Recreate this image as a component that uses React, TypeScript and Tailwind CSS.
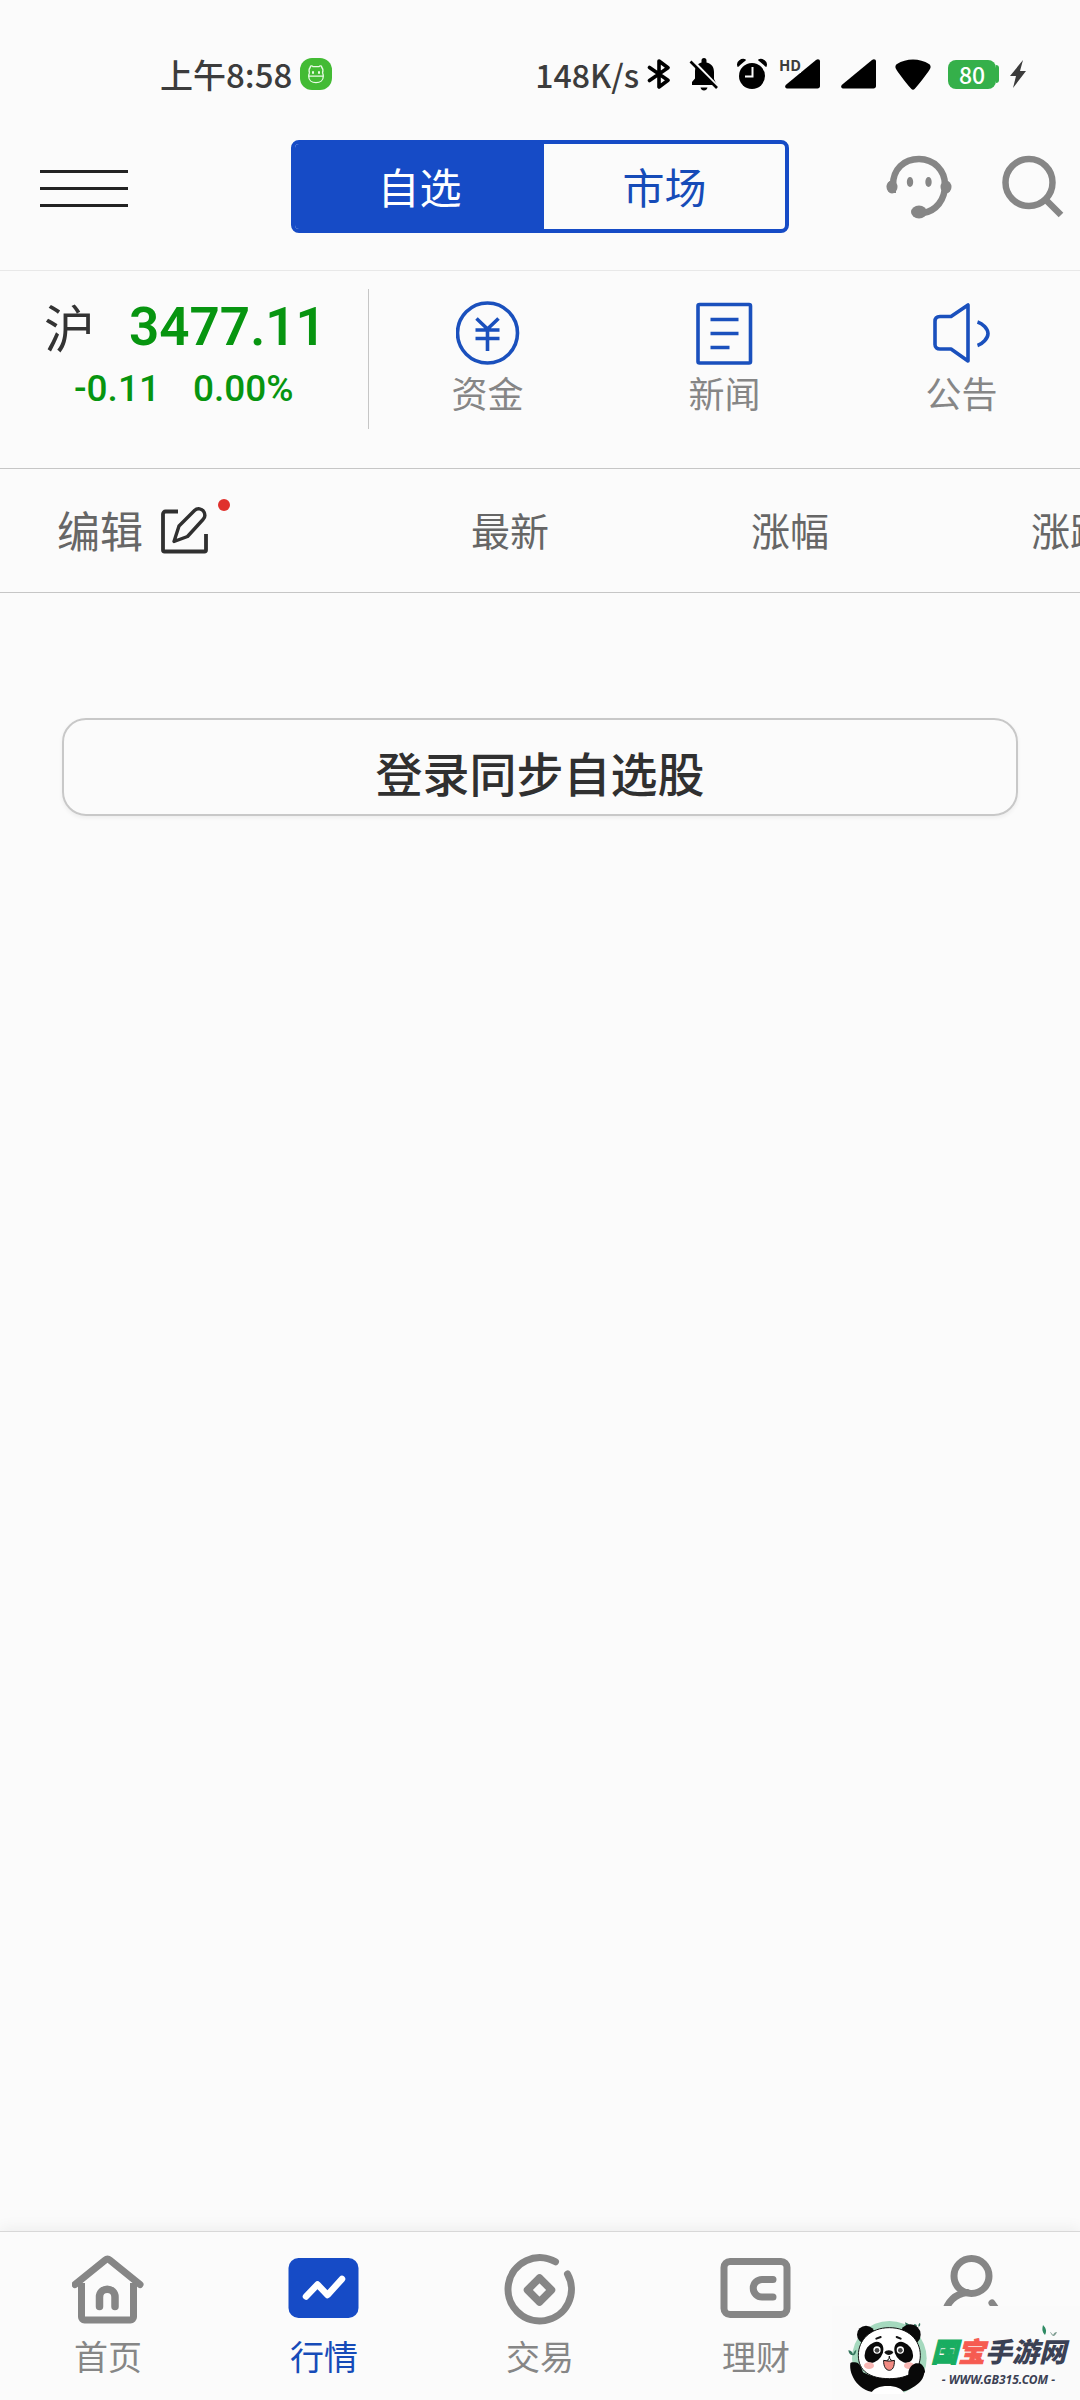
import type { ReactNode } from 'react';

function StatusBar() {
  return (
    <div className="flex h-[98px] items-center justify-between pt-[50px] pr-[53px] pl-[160px] text-[32px] leading-[46px] font-medium text-[#3c3c3c]">
      <div className="flex items-center gap-2">
        <span className="text-[33px]">上午8:58</span>
        <svg width="32" height="32" viewBox="0 0 32 32" fill="none" stroke="#e9fbe6" strokeWidth="1.3">
          <rect width="32" height="32" rx="12" fill="#43bb34" stroke="none" />
          <path d="M9.500 15c-.8-2.500-.5-4.500.8-5.800-.3-1.500 1.700-1.900 2.700-.5h6c1-1.400 3-1 2.700.5 1.300 1.300 1.600 3.300.8 5.800" />
          <path d="M8.700 18.200h14.600c0 4.300-3.300 6.500-7.300 6.500s-7.300-2.200-7.300-6.500Zm0 0c0-1.400.3-2.400.8-3.200M23.300 18.200c0-1.400-.3-2.400-.8-3.200" />
          <path d="M13 13.300v2.400M19 13.300v2.400" strokeWidth="2" />
        </svg>
      </div>
      <div className="flex items-center">
        <span>148K/s</span>
        <svg className="ml-2" width="24" height="32" viewBox="0 0 24 32" fill="none" stroke="#000" strokeWidth="3.600" strokeLinejoin="round" strokeLinecap="round">
          <path d="M2.500 9.500 21 22.300 12 29V3l9 6.700L2.500 22.500" />
        </svg>
        <svg className="ml-[18px]" width="30" height="34" viewBox="0 0 30 34">
          <path d="M3 28v-3l3-3.500V15C6 9.500 8.500 6.500 12.500 5.500V3.500a2.500 2.500 0 0 1 5 0v2C22.500 6.500 25 10 25 15v7l3 6ZM11.500 30.500h7c-.5 2-1.700 3-3.500 3s-3-1-3.500-3Z" fill="#000" />
          <path d="M1 1 32 33" stroke="#fbfbfb" strokeWidth="3" />
          <path d="M1.500 4.500 28 31" stroke="#000" strokeWidth="2.600" />
        </svg>
        <svg className="ml-[18px]" width="30" height="32" viewBox="0 0 30 32">
          <path d="M1.500 8.500C-.5 4 5 .5 8.500 2.500M28.500 8.500C30.500 4 25 .5 21.500 2.500" fill="#000" stroke="#000" strokeWidth="2" />
          <circle cx="15" cy="18" r="13" fill="#000" />
          <path d="M15.500 9v9.500H8" fill="none" stroke="#fbfbfb" strokeWidth="2" />
        </svg>
        <div className="relative ml-[18px] h-[30px] w-[36px]">
          <svg width="36" height="30" viewBox="0 0 36 30">
            <path d="M2 29.500c-2 0-2.500-2.500-1-3.800L31 1c2-1.500 4-.5 4 1.500V27c0 1.500-1 2.500-2.500 2.500Z" fill="#000" />
          </svg>
          <span className="absolute -top-[2px] -left-[6px] bg-[#fbfbfb] text-[15px] leading-[16px] font-bold">HD</span>
        </div>
        <svg className="ml-5" width="36" height="30" viewBox="0 0 36 30">
          <path d="M2 29.500c-2 0-2.500-2.500-1-3.800L31 1c2-1.500 4-.5 4 1.500V27c0 1.500-1 2.500-2.500 2.500Z" fill="#000" />
        </svg>
        <svg className="ml-[18px]" width="36" height="31" viewBox="0 0 36 31">
          <path d="M.8 9.500C0 8 .5 6 2 5 11-1 25-1 34 5c1.500 1 2 3 1.200 4.500-1.500 3-9 13-15.400 20.300-1 1.200-2.600 1.200-3.600 0C9.800 22.500 2.300 12.500.8 9.500Z" fill="#000" />
        </svg>
        <div className="ml-[17px] flex items-center">
          <span className="flex h-[29px] w-[48px] items-center justify-center rounded-lg bg-[#35b04a] text-[23px] leading-none font-medium text-white">80</span>
          <span className="h-[18px] w-[3px] rounded-r-sm bg-[#35b04a]" />
        </div>
        <svg className="ml-[10px]" width="18" height="30" viewBox="0 0 18 30">
          <path d="M14 1 1 17h6L4 29 17 12h-6Z" fill="#3c3c3c" />
        </svg>
      </div>
    </div>
  );
}

function Header() {
  return (
    <header className="grid grid-cols-[1fr_498px_1fr] items-center border-b border-[#e8e8e8] pt-[42px] pb-[37px]">
      <div className="pt-[3px] pl-10">
        <button aria-label="菜单" className="flex w-[88px] flex-col gap-[14px] py-4">
          <span className="h-[3px] w-full bg-[#222]" />
          <span className="h-[3px] w-full bg-[#222]" />
          <span className="h-[3px] w-full bg-[#222]" />
        </button>
      </div>
      <div className="flex h-[93px] overflow-hidden rounded-lg border-4 border-[#164bc6] text-[42px]">
        <button className="w-[249px] bg-[#164bc6] pb-[3px] text-white">自选</button>
        <button className="flex-1 pb-[3px] text-[#164bb8]">市场</button>
      </div>
      <div className="flex items-center justify-end gap-[50px] pr-4">
        <button aria-label="客服">
          <svg width="66" height="64" viewBox="0 0 66 64" fill="none" stroke="#868686" strokeWidth="6.500">
            <path d="M7 30C7 14 18 4 33 4s26 11.500 26 26c0 15-9 26-22 28" />
            <path d="M10 26v12H7a6.500 6.500 0 0 1-3-12ZM57 25.500v13a6.500 6.500 0 0 0 4-12Z" fill="#868686" stroke="none" />
            <ellipse cx="6" cy="32" rx="5.500" ry="6.500" fill="#868686" stroke="none" />
            <ellipse cx="60" cy="32" rx="5.500" ry="6.500" fill="#868686" stroke="none" />
            <ellipse cx="33" cy="57" rx="8" ry="6.500" fill="#868686" stroke="none" />
            <ellipse cx="24" cy="27" rx="3.200" ry="5" fill="#868686" stroke="none" />
            <ellipse cx="42.500" cy="27" rx="3.200" ry="5" fill="#868686" stroke="none" />
          </svg>
        </button>
        <button aria-label="搜索">
          <svg width="62" height="64" viewBox="0 0 62 64" fill="none" stroke="#868686" strokeWidth="6.500">
            <circle cx="27" cy="27.500" r="23.500" />
            <path d="M43.500 44.500 59 60" />
          </svg>
        </button>
      </div>
    </header>
  );
}

const shortcuts: { label: string; icon: ReactNode }[] = [
  {
    label: '资金',
    icon: (
      <>
        <circle cx="31.500" cy="32" r="30" />
        <path d="M20.500 17.500 31.500 28l11-10.500M19.500 29h24M19.500 37.500h24M31.500 28v22" />
      </>
    ),
  },
  {
    label: '新闻',
    icon: (
      <>
        <rect x="5" y="3.500" width="52.500" height="58.500" rx="1.500" />
        <path d="M17.500 18.500h28M17.500 32.500h28M17.500 46.500h19" />
      </>
    ),
  },
  {
    label: '公告',
    icon: (
      <>
        <path d="M38 4v56L21 48H10c-3 0-5-1.500-5-4.500v-23c0-3.500 2-5 5-5h11Z" />
        <path d="M47.500 21c5 1.500 10.500 6.500 10.500 11.500s-5.500 10.500-10.500 12" />
      </>
    ),
  },
];

function IndexPanel() {
  return (
    <section className="flex h-[198px] border-b border-[#c6c6c6]">
      <div className="mt-[18px] h-[140px] w-[369px] shrink-0 border-r border-[#c6c6c6] pt-[7px] text-[#079510]">
        <div className="flex h-16 items-center pl-11">
          <span className="pb-1 text-[51px] text-[#333]">沪</span>
          <span className="ml-[34px] font-[Roboto] text-[53px] font-semibold">3477.11</span>
        </div>
        <div className="mt-[5px] flex h-12 items-center gap-[33px] pl-[74px] font-[Roboto] text-[37px] font-medium">
          <span>-0.11</span>
          <span>0.00%</span>
        </div>
      </div>
      <div className="grid flex-1 grid-cols-3 pt-[30px]">
        {shortcuts.map((s) => (
          <button key={s.label} className="flex flex-col items-center gap-[5px] text-[36px] leading-[44px] text-[#868686]">
            <svg width="64" height="64" viewBox="0 0 64 64" fill="none" stroke="#1a50bd" strokeWidth="3.600" strokeLinejoin="round">
              {s.icon}
            </svg>
            {s.label}
          </button>
        ))}
      </div>
    </section>
  );
}

function ListHeader() {
  return (
    <div className="flex h-[124px] items-center overflow-hidden border-b border-[#c6c6c6] pb-[2px] text-[39px] text-[#666]">
      <div className="w-[370px] shrink-0 pl-[57px]">
        <button className="relative flex items-center gap-[17px] text-[43px]">
          编辑
          <svg width="48" height="48" viewBox="0 0 48 48" fill="none" stroke="#303030" strokeWidth="3.800" strokeLinejoin="round">
            <path d="M18 5.500H5.500a2.500 2.500 0 0 0-2.500 2.500v36a1.500 1.500 0 0 0 1.500 1.500h40A1.500 1.500 0 0 0 46 44V28" />
            <path d="M14 35.500 19 20 34.500 4.500a6 6 0 0 1 9.500 1.500c1.500 3 1 5.500-1 7.500L27.500 30.500Z" strokeWidth="3.400" />
          </svg>
          <span className="absolute top-[2px] -right-[22px] size-3 rounded-full bg-[#e0302c]" />
        </button>
      </div>
      <button className="w-[280px] shrink-0">最新</button>
      <button className="w-[280px] shrink-0">涨幅</button>
      <button className="w-[280px] shrink-0">涨跌</button>
    </div>
  );
}

const tabs: { label: string; icon: ReactNode; active?: boolean }[] = [
  {
    label: '首页',
    icon: (
      <>
        <path d="M9.500 29v34a3 3 0 0 0 3 3h46a3 3 0 0 0 3-3V29" />
        <path d="M3 30.500 33 6.200a4 4 0 0 1 5 0L68 30.500" strokeLinecap="round" />
        <path d="M27.500 52.500V43a7.500 7.500 0 0 1 15.500 0v9.500" strokeWidth="7.500" strokeLinecap="round" />
      </>
    ),
  },
  {
    label: '行情',
    active: true,
    icon: (
      <>
        <rect x="0.500" y="4" width="70" height="60" rx="10" fill="#164bc6" stroke="none" />
        <path d="m18 42.500 11.500-12 10 10.500L54 25" stroke="#fff" strokeWidth="6.500" strokeLinecap="round" />
      </>
    ),
  },
  {
    label: '交易',
    icon: (
      <>
        <path d="M51.500 7.800A31.700 31.700 0 1 0 63.500 20" strokeLinecap="round" />
        <path d="m35.500 24 12 12-12 12-12-12Z" strokeWidth="7.500" />
      </>
    ),
  },
  {
    label: '理财',
    icon: (
      <>
        <rect x="4" y="7.500" width="63" height="53" rx="6" />
        <path d="M53 25.500H42a8.500 8.500 0 0 0 0 17.500h11" strokeLinecap="round" />
      </>
    ),
  },
  {
    label: '',
    icon: (
      <>
        <circle cx="35.500" cy="22" r="17.500" />
        <path d="M8 61c3-12 10-21 23-22.500M56 49c3 3.500 5 7 6 11" strokeLinecap="round" />
      </>
    ),
  },
];

function Watermark() {
  return (
    <div className="absolute right-0 bottom-0 flex h-[94px] w-[248px] bg-[#fafafa] pt-3 pl-[15px]">
      <svg className="shrink-0" width="80" height="76" viewBox="80 295 240 228">
        <circle cx="207" cy="416" r="112" fill="#a5d9be" />
        <path d="M84 392c7 0 12 4 14 12 3-8 6-12 10-14-1 9-3 15-9 17-9 0-14-6-15-15ZM254 308c14 5 22 12 20 24-12-2-18-11-20-24ZM290 322c-6-2-8-5-9-9 6 0 10 4 9 9ZM295 322c-2-6 0-10 4-12 2 6 0 10-4 12Z" fill="#32735b" />
        <path d="M104 428c10 0 17 8 24 30 44 23 104 23 142 5-4-26 9-43 26-34 20 10 24 43-5 65-21 16-40 25-68 25h-50c-57 0-88-52-83-88 2-4 7-3 14-3Z" fill="#090909" />
        <path d="M152 523c8-32 92-32 100 0Z" fill="#fff" />
        <circle cx="137" cy="345" r="27" fill="#090909" />
        <circle cx="270" cy="345" r="31" fill="#090909" />
        <path d="M207 324c57 0 93 37 93 83 0 47-35 70-93 70s-93-23-93-70c0-46 36-83 93-83Z" fill="#fff" stroke="#111" strokeWidth="3" />
        <ellipse cx="161" cy="398" rx="25" ry="34" transform="rotate(35 161 398)" fill="#090909" />
        <ellipse cx="250" cy="398" rx="25" ry="34" transform="rotate(-35 250 398)" fill="#090909" />
        <circle cx="170" cy="391" r="11" fill="#fff" />
        <circle cx="240" cy="391" r="11" fill="#fff" />
        <circle cx="170" cy="392" r="7" fill="#444" />
        <circle cx="240" cy="392" r="7" fill="#444" />
        <path d="m168 357 13-5M229 352l12 5" stroke="#111" strokeWidth="6" strokeLinecap="round" />
        <path d="M192 398c5-8 22-8 27 0-5 10-21 12-27 0Z" fill="#111" />
        <path d="M191 424c10 1 16-4 16-15 0 11 7 16 16 15" fill="none" stroke="#111" strokeWidth="3" />
        <path d="M190 422c12 3 22 3 32 0 1 20-6 30-15 30s-18-10-17-30Z" fill="#f28b83" stroke="#111" strokeWidth="3" />
        <ellipse cx="146" cy="438" rx="15" ry="10" fill="#f8b7b4" />
        <ellipse cx="266" cy="438" rx="15" ry="10" fill="#f8b7b4" />
        <path d="M264 460c0-12 10-25 22-29 15-3 27 8 28 26l-20 30-29-9Z" fill="#090909" />
      </svg>
      <div className="relative mt-[15px] ml-1">
        <p className="flex text-[27px] leading-[36px] font-black whitespace-nowrap text-[#3b4154] italic">
          <span className="text-[#18ad61] [-webkit-text-stroke:1px_#18ad61]">国</span>
          <span className="text-[#f65b51] [-webkit-text-stroke:1px_#f65b51]">宝</span>
          <span>手游网</span>
        </p>
        <p className="text-center font-['Noto_Sans'] text-[12px] leading-[22px] font-bold whitespace-nowrap text-[#3b4154] italic">- WWW.GB315.COM -</p>
        <svg className="absolute -top-2 right-2" width="18" height="12" viewBox="0 0 18 12">
          <path d="M3 0c3 3 4 6 2 10C2 7 2 4 3 0Z" fill="#2e8a63" />
          <path d="M10 7c1 2 2 3 3 4 2 0 3-2 4-4-2 0-3 1-4 3-1-1-2-3-3-3Z" fill="#7b9a8e" />
        </svg>
      </div>
    </div>
  );
}

function TabBar() {
  return (
    <nav className="relative grid h-[169px] grid-cols-5 border-t border-[#d8d8d8] pt-[22px] shadow-[0_-3px_14px_rgba(0,0,0,0.06)]">
      {tabs.map((t, i) => (
        <button
          key={i}
          aria-label={t.label || '账户'}
          className={`flex flex-col items-center gap-2 text-[34px] leading-[44px] ${t.active ? 'text-[#164bb8]' : 'text-[#868686]'}`}
        >
          <svg width="72" height="72" viewBox="0 0 72 72" fill="none" stroke="#868686" strokeWidth="7" strokeLinejoin="round">
            {t.icon}
          </svg>
          {t.label}
        </button>
      ))}
      <Watermark />
    </nav>
  );
}

export default function App() {
  return (
    <div className="flex min-h-screen flex-col overflow-x-hidden bg-[#fbfbfb] font-['Noto_Sans_CJK_SC',sans-serif]">
      <StatusBar />
      <Header />
      <IndexPanel />
      <ListHeader />
      <main className="flex-1 px-[62px] pt-[125px]">
        <button className="h-[98px] w-full rounded-[24px] border-2 border-[#c8c8c8] pt-[10px] text-[47px] leading-[60px] font-medium text-[#303030] shadow-[0_2px_4px_rgba(0,0,0,0.06)]">
          登录同步自选股
        </button>
      </main>
      <TabBar />
    </div>
  );
}
